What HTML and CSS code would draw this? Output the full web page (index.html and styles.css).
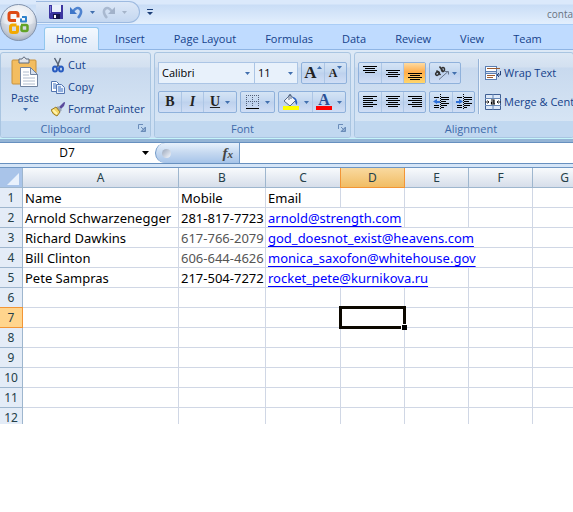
FILE: index.html
```html
<!DOCTYPE html>
<html lang="en">
<head>
<meta charset="utf-8">
<title>contacts</title>
<link rel="stylesheet" href="styles.css">
</head>
<body>
<header class="titlebar">
  <button class="office" aria-label="Office Button">
    <svg width="38" height="42" viewBox="0 0 38 42">
      <defs>
        <radialGradient id="orb" cx="50%" cy="35%" r="65%"><stop offset="0" stop-color="#fff"/><stop offset=".6" stop-color="#e6eaf0"/><stop offset="1" stop-color="#a3adbd"/></radialGradient>
      </defs>
      <circle cx="18.500" cy="22.500" r="18" fill="url(#orb)" stroke="#8293ad"/>
      <path d="M2 23a17 16 0 0 0 33 0q-16 6-33 0z" fill="#c6cdd8" opacity=".6"/>
      <g fill="none" stroke-linejoin="round">
        <path d="M16 20.500h-5q-2 0-2-2v-4q0-2 2-2h5q2 0 2 2v3" stroke="#dd4a14" stroke-width="3"/>
        <path d="M22 17h4v4.500h-5v-3" stroke="#2f83cc" stroke-width="2"/>
        <path d="M16.500 25h-4q-2 0-2 2v3.500q0 2 2 2h3q2 0 2-2v-5" stroke="#f2a900" stroke-width="3"/>
        <path d="M21 25h5q1.500 0 1.500 1.500v3q0 1.500-1.500 1.500h-3q-1.500 0-1.500-1.500v-4" stroke="#62a325" stroke-width="2.500"/>
      </g>
    </svg>
  </button>
  <div class="quick">
    <button aria-label="Save"><svg width="14" height="14" viewBox="0 0 14 14"><path d="M0 0h14v14H1L0 13z" fill="#3b35a0"/><path d="M3 0h9v7H3z" fill="#e9f0fb"/><path d="M1 1h1v7H1z" fill="#7b78d4"/><path d="M4 9h7v5H4z" fill="#16164a"/><path d="M5 10h2v3H5z" fill="#fff"/></svg></button>
    <button aria-label="Undo"><svg width="13" height="13" viewBox="0 0 13 13"><path d="M3 5.500Q7 0 10 3t-2 9" fill="none" stroke="#4f83cf" stroke-width="2.500"/><path d="M0 1v7h7z" fill="#3f76c8"/></svg></button>
    <button aria-label="Undo list"><svg class="caret" viewBox="0 0 5 3"><path d="M0 0h5L2.500 3z"/></svg></button>
    <button aria-label="Redo"><svg width="13" height="13" viewBox="0 0 13 13"><path d="M10 5.500Q6 0 3 3t2 9" fill="none" stroke="#a9b9d0" stroke-width="2.500"/><path d="M13 1v7H6z" fill="#a2b2ca"/></svg></button>
    <button aria-label="Redo list"><svg class="caret pale" viewBox="0 0 5 3"><path d="M0 0h5L2.500 3z"/></svg></button>
  </div>
  <button class="customize" aria-label="Customize toolbar"><svg width="6" height="6" viewBox="0 0 6 6"><path d="M0 0h6v1H0zM0 3h6L3 6z" fill="#1c3f78"/></svg></button>
  <span class="doc">conta</span>
</header>
<nav class="tabs">
  <a class="on" href="#home">Home</a><a href="#insert">Insert</a><a href="#layout">Page Layout</a><a href="#formulas">Formulas</a><a href="#data">Data</a><a href="#review">Review</a><a href="#view">View</a><a href="#team">Team</a>
</nav>
<main>
<div class="ribbon">
  <section class="group clipboard">
    <div class="body">
      <button class="paste">
        <svg width="28" height="32" viewBox="0 0 28 32"><rect x="1" y="4" width="24" height="24" rx="1" fill="#f3bd60" stroke="#c8923c"/><path d="M8 7V3h3q2-4 4 0h3v4z" fill="#dfe3ea" stroke="#5f6a7c"/><path d="M9.500 11.500h10l7 7v12h-17z" fill="#fff" stroke="#71839f"/><path d="M19.500 11.500v7h7z" fill="#d6e0ee" stroke="#71839f"/><path d="M12 16h6M12 19h6M12 22h12M12 25h12M12 28h12" stroke="#b0bccd"/></svg>
        <span>Paste</span>
        <svg class="caret" viewBox="0 0 5 3"><path d="M0 0h5L2.500 3z"/></svg>
      </button>
      <div class="stack">
        <button><svg width="14" height="16" viewBox="0 0 14 16"><path d="M3.500 1l5 9M9.500 1L6 10" stroke="#5a6678" stroke-width="1.500"/><g fill="none" stroke="#285bc0" stroke-width="2"><ellipse cx="4" cy="12" rx="2" ry="2.500"/><ellipse cx="10" cy="12" rx="2" ry="2.500"/></g></svg>Cut</button>
        <button><svg width="14" height="16" viewBox="0 0 14 16"><g fill="#fff" stroke="#5375b0"><path d="M.5 2.500h5l3 3v7h-8z"/><path d="M5.500 5.500h5l3 3v6h-8z" fill="#e6effc"/></g><path d="M2 5h3M2 7h3M2 9h3M7 8h3M7 10h5M7 12h5" stroke="#3d6fc0"/></svg>Copy</button>
        <button><svg width="14" height="16" viewBox="0 0 14 16"><path d="M8 6l4-4q2-2 2 0l-1 3-3 3z" fill="#5b4a9c"/><path d="M7 5l4 4-2 2-4-4z" fill="#9aa5b4"/><path d="M5 6l4 5-3 4Q2 14 0 9z" fill="#f4d663" stroke="#987b28"/><path d="M2 9l4 4" stroke="#fff4b0" stroke-width="2"/></svg>Format Painter</button>
      </div>
    </div>
    <h2>Clipboard<button class="launch" aria-label="Clipboard options"><svg width="8" height="8" viewBox="0 0 8 8"><path d="M.5 5V.5H5" fill="none" stroke="#6a8cb9"/><path d="M3 3l2 2M7.500 3v4.500H3zM4 7h3V4z" fill="#6a8cb9" stroke="#6a8cb9"/></svg></button></h2>
  </section>
  <section class="group font">
    <div class="body rows">
      <div class="line">
        <div class="combos">
          <label class="combo face"><select aria-label="Font"><option>Calibri</option></select><svg class="caret" viewBox="0 0 5 3"><path d="M0 0h5L2.500 3z"/></svg></label>
          <label class="combo size"><select aria-label="Font size"><option>11</option></select><svg class="caret" viewBox="0 0 5 3"><path d="M0 0h5L2.500 3z"/></svg></label>
        </div>
        <div class="set">
          <button class="serif big" aria-label="Grow font">A<svg class="caret" viewBox="0 0 5 3"><path d="M0 3h5L2.500 0z"/></svg></button>
          <button class="serif small" aria-label="Shrink font">A<svg class="caret" viewBox="0 0 5 3"><path d="M0 0h5L2.500 3z"/></svg></button>
        </div>
      </div>
      <div class="line">
        <div class="set">
          <button class="serif">B</button><button class="serif"><i>I</i></button><button class="serif wide"><u>U</u><svg class="caret" viewBox="0 0 5 3"><path d="M0 0h5L2.500 3z"/></svg></button>
        </div>
        <div class="set">
          <button class="wide" aria-label="Borders"><svg width="14" height="14" viewBox="0 0 14 14"><path d="M.5 0v12M6.500 0v12M12.500 0v12M0 .5h13M0 6.500h13" stroke="#53617a" stroke-dasharray="1 1"/><path d="M0 13.500h13" stroke="#000"/></svg><svg class="caret" viewBox="0 0 5 3"><path d="M0 0h5L2.500 3z"/></svg></button>
        </div>
        <div class="set">
          <button class="wide" aria-label="Fill color"><svg width="16" height="16" viewBox="0 0 16 16"><path d="M1 7l6-6 6 5-6 6z" fill="#f2f5fa" stroke="#586b88"/><path d="M6 6V1q2-2 2 1v3" fill="none" stroke="#586b88"/><path d="M9 3q6 0 5 8-2-1-2-5z" fill="#2c62c0"/><path d="M0 12h16v4H0z" fill="#ff0"/></svg><svg class="caret" viewBox="0 0 5 3"><path d="M0 0h5L2.500 3z"/></svg></button>
          <button class="wide serif" aria-label="Font color"><span class="tint">A</span><svg class="caret" viewBox="0 0 5 3"><path d="M0 0h5L2.500 3z"/></svg></button>
        </div>
      </div>
    </div>
    <h2>Font<button class="launch" aria-label="Font options"><svg width="8" height="8" viewBox="0 0 8 8"><path d="M.5 5V.5H5" fill="none" stroke="#6a8cb9"/><path d="M3 3l2 2M7.500 3v4.500H3zM4 7h3V4z" fill="#6a8cb9" stroke="#6a8cb9"/></svg></button></h2>
  </section>
  <section class="group alignment">
    <div class="body">
      <div class="rows">
        <div class="line">
          <div class="set">
            <button aria-label="Top align"><svg class="bars" viewBox="0 0 14 14"><path d="M0 .5h14M2 2.500h10M0 4.500h14M2 6.500h10"/></svg></button>
            <button aria-label="Middle align"><svg class="bars" viewBox="0 0 14 14"><path d="M0 4.500h14M2 6.500h10M0 8.500h14M2 10.500h10"/></svg></button>
            <button class="active" aria-label="Bottom align"><svg class="bars" viewBox="0 0 14 14"><path d="M0 7.500h14M2 9.500h10M0 11.500h14M2 13.500h10"/></svg></button>
          </div>
          <div class="set"><button class="orient" aria-label="Orientation"><svg width="16" height="14" viewBox="0 0 16 14"><g fill="none" stroke="#333" stroke-width="1.500"><ellipse cx="3.500" cy="7.500" rx="2" ry="1.500" transform="rotate(-45 3.500 7.500)"/><path d="M2.500 4.500l4 4.500M5.500.5l4 5.500"/><ellipse cx="9" cy="3.500" rx="1.500" ry="2"/></g><path d="M5 13.500l9-8M11 5.500h3.500v3" fill="none" stroke="#68758b"/></svg><svg class="caret" viewBox="0 0 5 3"><path d="M0 0h5L2.500 3z"/></svg></button></div>
        </div>
        <div class="line">
          <div class="set">
            <button aria-label="Align left"><svg class="bars" viewBox="0 0 14 14"><path d="M0 1.500h14M0 3.500h10M0 5.500h14M0 7.500h10M0 9.500h14M0 11.500h10"/></svg></button>
            <button aria-label="Center"><svg class="bars" viewBox="0 0 14 14"><path d="M0 1.500h14M2 3.500h10M0 5.500h14M2 7.500h10M0 9.500h14M2 11.500h10"/></svg></button>
            <button aria-label="Align right"><svg class="bars" viewBox="0 0 14 14"><path d="M0 1.500h14M4 3.500h10M0 5.500h14M4 7.500h10M0 9.500h14M4 11.500h10"/></svg></button>
          </div>
          <div class="set indent">
            <button aria-label="Decrease indent"><svg width="16" height="16" viewBox="0 0 16 16"><path d="M1 3.500h5M8 3.500h8M8 5.500h8M8 7.500h5M8 9.500h8M1 11.500h5M8 11.500h6M1 13.500h5M8 13.500h3" stroke="#000"/><path d="M7.500 0v16" stroke="#000" stroke-dasharray="1 1"/><path d="M0 7.500L4 5v2h3v2H4v1z" fill="#2f6fd6"/></svg></button>
            <button aria-label="Increase indent"><svg width="16" height="16" viewBox="0 0 16 16"><path d="M1 3.500h5M8 3.500h8M8 5.500h8M8 7.500h5M8 9.500h8M1 11.500h5M8 11.500h6M1 13.500h5M8 13.500h3" stroke="#000"/><path d="M7.500 0v16" stroke="#000" stroke-dasharray="1 1"/><path d="M7 7.500L3 5v2H0v2h3v1z" fill="#2f6fd6"/></svg></button>
          </div>
        </div>
      </div>
      <div class="cells">
        <button><svg width="16" height="16" viewBox="0 0 16 16"><path d="M.5 1v14M11.500 1v14M0 1.500h11M0 6.500h11M0 8.500h11M0 14.500h11" fill="none" stroke="#5a7eb2"/><path d="M1 2h10v4H1zM1 9h10v5H1z" fill="#fff"/><path d="M2 3.500h13M2 10.500h8M2 12.500h6" stroke="#9a5b31"/><path d="M15.500 6v4H13M14 8l-2 2 2 2" fill="none" stroke="#24427a"/></svg>Wrap Text</button>
        <button><svg width="16" height="16" viewBox="0 0 16 16"><path d="M.5.5h15v15H.5z" fill="#dce8f8" stroke="#3f5f93"/><path d="M0 4.500h16M0 11.500h16M8 0v4M8 12v4" stroke="#6586b5"/><path d="M1 5h14v6H1z" fill="#fff"/><path d="M0 8h4M12 8h4M2.500 6.500L4 8 2.500 9.500M13.500 6.500L12 8l1.500 1.500" fill="none" stroke="#222"/><path d="M6 6h3v4H6.500V8H9M9 10h1" fill="none" stroke="#000" stroke-width="1.200"/></svg>Merge &amp; Center</button>
      </div>
    </div>
    <h2>Alignment</h2>
  </section>
</div>
<div class="formula">
  <label class="namebox"><input aria-label="Name box" value="D7"><svg width="7" height="4" viewBox="0 0 7 4"><path d="M0 0h7L3.500 4z"/></svg></label>
  <div class="fx"><span class="knob"></span><button class="serif" aria-label="Insert function"><i>f<small>x</small></i></button></div>
  <input class="entry" aria-label="Formula">
</div>
<div class="sheet">
<table>
  <colgroup><col class="num"><col class="a"><col class="b"><col class="c"><col class="std"><col class="std"><col class="std"><col class="std"></colgroup>
  <thead><tr><th class="corner"><svg width="12" height="12" viewBox="0 0 12 12"><path d="M12 0v12H0z" fill="#e9f1fc"/></svg></th><th>A</th><th>B</th><th>C</th><th class="sel">D</th><th>E</th><th>F</th><th>G</th></tr></thead>
  <tbody>
    <tr><th>1</th><td>Name</td><td>Mobile</td><td>Email</td><td></td><td></td><td></td><td></td></tr>
    <tr><th>2</th><td>Arnold Schwarzenegger</td><td>281-817-7723</td><td colspan="2"><a href="mailto:arnold@strength.com">arnold@strength.com</a></td><td></td><td></td><td></td></tr>
    <tr><th>3</th><td>Richard Dawkins</td><td class="gray">617-766-2079</td><td colspan="4"><a href="mailto:god_doesnot_exist@heavens.com">god_doesnot_exist@heavens.com</a></td><td></td></tr>
    <tr><th>4</th><td>Bill Clinton</td><td class="gray">606-644-4626</td><td colspan="4"><a href="mailto:monica_saxofon@whitehouse.gov">monica_saxofon@whitehouse.gov</a></td><td></td></tr>
    <tr><th>5</th><td>Pete Sampras</td><td>217-504-7272</td><td colspan="3"><a href="mailto:rocket_pete@kurnikova.ru">rocket_pete@kurnikova.ru</a></td><td></td><td></td></tr>
    <tr><th>6</th><td></td><td></td><td></td><td></td><td></td><td></td><td></td></tr>
    <tr><th class="sel">7</th><td></td><td></td><td></td><td class="current"><span class="cursor"></span></td><td></td><td></td><td></td></tr>
    <tr><th>8</th><td></td><td></td><td></td><td></td><td></td><td></td><td></td></tr>
    <tr><th>9</th><td></td><td></td><td></td><td></td><td></td><td></td><td></td></tr>
    <tr><th>10</th><td></td><td></td><td></td><td></td><td></td><td></td><td></td></tr>
    <tr><th>11</th><td></td><td></td><td></td><td></td><td></td><td></td><td></td></tr>
    <tr><th>12</th><td></td><td></td><td></td><td></td><td></td><td></td><td></td></tr>
  </tbody>
</table>
</div>
</main>
</body>
</html>
```
FILE: styles.css
```css
* { box-sizing: border-box; }
body { margin: 0; background: #fff; font: 11px/16px "Open Sans", "Noto Sans", sans-serif; color: #15428b; overflow: hidden; }
button { border: 0; padding: 0; margin: 0; background: none; font: inherit; color: inherit; display: flex; align-items: center; justify-content: center; }
svg { display: block; flex: none; }
input, select { font: inherit; color: #000; border: 0; padding: 0; margin: 0; background: none; appearance: none; outline: none; min-width: 0; }
.caret { width: 5px; height: 3px; fill: #416fae; }
.caret.pale { fill: #a5b4c9; }

.titlebar { position: relative; height: 25px; display: flex; align-items: center; background: linear-gradient(#dbe9fb 0, #dbe9fb 4px, #c9ddf6 5px, #e3effd 100%); border-bottom: 1px solid #aacdf6; white-space: nowrap; }
.office { position: absolute; left: 0; top: 0; z-index: 2; }
.quick { display: flex; align-items: center; gap: 7px; height: 22px; margin-left: 36px; width: 104px; padding-left: 13px; border: 1px solid #9dbae0; border-left: 0; border-radius: 0 11px 11px 0; background: linear-gradient(#dde8f7, #c4d7f0); }
.customize { margin-left: 7px; }
.doc { margin-left: auto; width: 26px; padding-top: 4px; font-size: 10px; color: #6a737f; }

.tabs { height: 25px; display: flex; align-items: flex-end; padding-left: 43px; background: #bfdbff; border-bottom: 1px solid #8fb5e5; white-space: nowrap; }
.tabs a { height: 22px; line-height: 22px; padding: 0 13px 0 14px; color: inherit; text-decoration: none; border: 1px solid transparent; border-bottom: 0; }
.tabs .on { height: 23px; padding: 0 11px; margin: 0 1px -1px; background: linear-gradient(#f3f8fe, #e0ebf8); border-color: #91c7ee; border-radius: 3px 3px 0 0; }

.ribbon { display: flex; gap: 3px; height: 92px; padding: 2px 0 4px; background: linear-gradient(#dde9f6, #c9ddf3); box-shadow: inset 0 -3px #94b4d5, inset 0 -4px #c5f5fa; overflow: hidden; }
.group { flex: none; display: flex; flex-direction: column; border: 1px solid #a9c5e1; border-radius: 3px; background: linear-gradient(#dce7f4 0, #d3e0f0 14px, #c8d9ee 15px, #dae8f6 100%); overflow: hidden; }
.clipboard { width: 151px; }
.font { width: 197px; }
.alignment { flex: 1 0 220px; }
.group .body { flex: 1; display: flex; min-height: 0; }
.group h2 { position: relative; margin: 0; height: 16px; text-align: center; background: #c1d8f0; color: #3e6aaa; font: inherit; padding-right: 20px; }
.launch { position: absolute; right: 4px; top: 3px; }
.group.alignment h2 { padding: 0 0 0 14px; }
.paste { width: 48px; flex-direction: column; justify-content: flex-start; padding-top: 3px; gap: 2px; }
.stack { display: flex; flex-direction: column; white-space: nowrap; padding: 1px 0 0 2px; }
.stack button { height: 22px; gap: 3px; justify-content: flex-start; }
.rows, .group .body.rows { display: flex; flex-direction: column; gap: 7px; padding: 9px 3px 0; }
.line { display: flex; gap: 3px; }
.set { display: flex; height: 22px; border: 1px solid #8fb1db; border-radius: 2px; background: linear-gradient(#d5e4f5 0, #c3d7f0 45%, #bdd1ed 50%, #d0def5 100%); }
.set button { width: 22px; color: #222; }
.set button + button { border-left: 1px solid #adc6e5; }
.set button.wide, .set .orient { width: 33px; gap: 5px; }
.set .orient { width: 30px; gap: 2px; }
.set .active { background: linear-gradient(#fddba2, #ffad4a 45%, #ffd66c); }
.bars { width: 14px; height: 14px; stroke: #000; }
.serif { font: bold 14px/16px "Liberation Serif", serif; }
.big { font-size: 17px; }
.small { font-size: 12px; }
.big .caret, .small .caret { align-self: flex-start; margin-top: 3px; }
.tint { width: 16px; height: 16px; font-size: 16px; line-height: 12px; color: #2a4f95; border-bottom: 4px solid #f00; }
.combos { display: flex; width: 140px; height: 22px; }
.combo { display: flex; align-items: center; padding: 0 4px 0 3px; border: 1px solid #abc5e5; background: #e8f1fb; }
.combo select { flex: 1; }
.face { width: 97px; }
.size { flex: 1; border-left: 0; }
.cells { display: flex; flex-direction: column; align-self: flex-start; height: 55px; margin-top: 6px; padding: 3px 0 0 6px; gap: 7px; border-left: 1px solid #96b3d7; white-space: nowrap; box-shadow: inset 1px 0 #edf4fc; }
.cells button { height: 22px; gap: 3px; justify-content: flex-start; }

.formula { display: flex; height: 22px; border: solid #6790bf; border-width: 1px 0; background: #fff; }
.namebox { display: flex; align-items: center; width: 155px; padding-right: 6px; fill: #000; }
.namebox input { flex: 1; text-align: center; font-size: 12px; padding-right: 8px; }
.fx { width: 85px; display: flex; align-items: center; justify-content: space-between; padding: 0 6px; border: 1px solid #7099c8; border-width: 0 1px; border-radius: 10px 0 0 10px; background: linear-gradient(#e8f1fc, #c5d8f0 50%, #a6c4e9); }
.fx button { font-size: 15px; color: #444; }
.fx small { font-size: 11px; }
.knob { width: 9px; height: 9px; border-radius: 50%; background: linear-gradient(135deg, #9aa7bb, #f6f9ff); }
.entry { flex: 1; }

.sheet { border-top: 3px solid #d5e5f7; box-shadow: inset 0 1px #6f96c3; padding-top: 1px; overflow: hidden; }
table { width: 597px; margin-bottom: -4px; border-collapse: separate; border-spacing: 0; table-layout: fixed; color: #000; font: 13px/18px "Noto Sans", sans-serif; }
.num { width: 23px; } .a { width: 156px; } .b { width: 87px; } .c { width: 75px; } .std { width: 64px; }
th, td { height: 20px; padding: 0 2px; border: solid #d0d7e5; border-width: 0 1px 1px 0; text-align: left; white-space: nowrap; }
th { padding: 0; font-weight: normal; font-size: 12px; text-align: center; color: #253f49; border-color: #9eb6ce; background: #e4ecf7; }
thead th { background: linear-gradient(#f8fafc, #d6deea); }
thead .corner { background: #a9c4e9; }
.corner svg { margin: 3px 0 0 7px; }
thead .sel { background: linear-gradient(#f9d99f, #f1bd64); border-color: #f29536; box-shadow: -1px 0 #f29536; }
tbody .sel { background: #ffd58d; border-color: #f29536; box-shadow: 0 -1px #f29536; }
.gray { color: #555; }
td a { color: #00f; text-underline-offset: 3px; text-decoration-skip-ink: none; }
.current { position: relative; }
.cursor { position: absolute; inset: -2px; border: 3px solid #0c0800; }
.cursor::after { content: ""; position: absolute; right: -4px; bottom: -4px; width: 5px; height: 5px; background: #000; box-shadow: -1px -1px #fff; }
```
